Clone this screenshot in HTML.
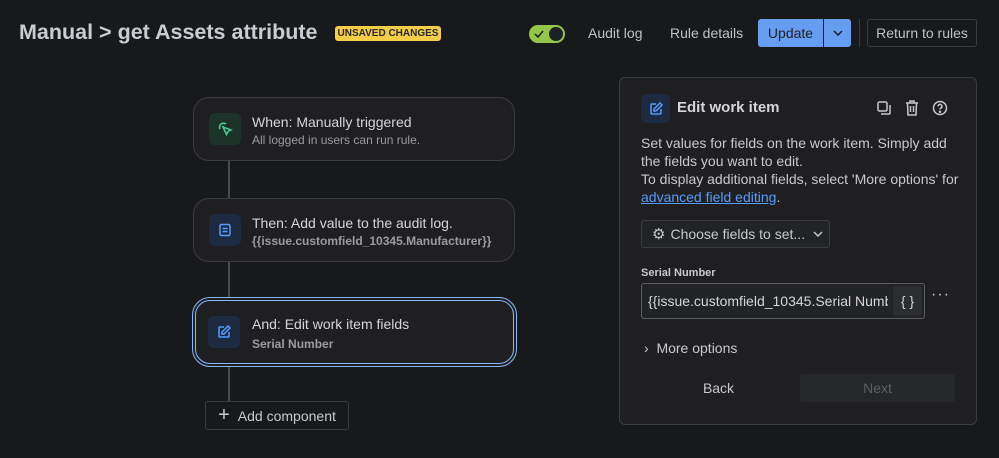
<!DOCTYPE html>
<html><head><meta charset="utf-8"><style>
*{box-sizing:border-box;margin:0;padding:0}
body{width:999px;height:458px;background:#18191b;font-family:"Liberation Sans",sans-serif;color:#c7c9cc;position:relative;overflow:hidden}
.a{position:absolute}
.card{position:absolute;left:193px;width:322px;height:64px;border:1px solid #3b3c40;border-radius:16px;background:#1f1f21}
.ic{position:absolute;left:15px;top:15px;width:32px;height:32px;border-radius:6px;display:flex;align-items:center;justify-content:center}
.t1{position:absolute;left:58px;top:16px;font-size:14px;color:#d4d6d9}
.t2{position:absolute;left:58px;top:35px;font-size:12px;color:#9a9ca1}
.btn{position:absolute;font-size:14px;display:flex;align-items:center;justify-content:center}
</style></head><body>
<div class="a" style="left:19px;top:20px;font-size:21.5px;font-weight:bold;color:#c9ccd2">Manual &gt; get Assets attribute</div>
<div class="a" style="left:335px;top:26px;width:106px;height:15px;background:#f5cd47;border-radius:3px;color:#292a2e;font-size:10px;font-weight:bold;text-align:center;line-height:15px">UNSAVED CHANGES</div>
<div class="a" style="left:529px;top:25px;width:36px;height:18px;background:#94c748;border-radius:9px"><svg class="a" style="left:5px;top:4px" width="10" height="10"><path d="M1 5l3 3 5-6" stroke="#1d2125" stroke-width="1.6" fill="none"/></svg><div class="a" style="left:20px;top:2px;width:14px;height:14px;border-radius:7px;background:#1d2125"></div></div>
<div class="btn" style="left:588px;top:19px;height:28px;color:#bfc1c4">Audit log</div>
<div class="btn" style="left:670px;top:19px;height:28px;color:#bfc1c4">Rule details</div>
<div class="btn" style="left:758px;top:19px;width:65px;height:28px;background:#669df1;border-radius:3px 0 0 3px;color:#1d2125">Update</div>
<div class="btn" style="left:824px;top:19px;width:27px;height:28px;background:#669df1;border-radius:0 3px 3px 0"><svg width="10" height="6"><path d="M1 1l4 4 4-4" stroke="#1d2125" stroke-width="1.5" fill="none"/></svg></div>
<div class="a" style="left:859px;top:19px;width:1px;height:28px;background:#3b3c40"></div>
<div class="btn" style="left:867px;top:19px;width:110px;height:28px;border:1px solid #3b3c40;border-radius:3px;color:#bfc1c4">Return to rules</div>

<div class="a" style="left:228px;top:160px;width:2px;height:245px;background:#4a4b4f"></div>
<div class="card" style="top:97px"><div class="ic" style="background:#1c3329"><svg width="16" height="16" viewBox="0 0 16 16" fill="none" stroke="#4bce97" stroke-width="1.5"><path d="M6 6l8 3-3 1.5-1.5 3z"/><path d="M3 8a4 4 0 0 1 6-5"/></svg></div><div class="t1">When: Manually triggered</div><div class="t2">All logged in users can run rule.</div></div>
<div class="card" style="top:198px"><div class="ic" style="background:#1c2b42"><svg width="16" height="16" viewBox="0 0 16 16" fill="none" stroke="#579dff" stroke-width="1.5"><rect x="3" y="2.5" width="10" height="11" rx="1.5"/><path d="M5.5 6.5h5M5.5 9.5h5"/></svg></div><div class="t1">Then: Add value to the audit log.</div><div class="t2" style="font-weight:bold">{{issue.customfield_10345.Manufacturer}}</div></div>
<div class="card" style="top:297px;left:192px;width:325px;height:70px;border:4px double #85b8ff;border-radius:18px"><div class="ic" style="background:#1c2b42;left:12px;top:15px"><svg width="16" height="16" viewBox="0 0 16 16" fill="none" stroke="#579dff" stroke-width="1.5"><path d="M8 3H4a1 1 0 0 0-1 1v8a1 1 0 0 0 1 1h8a1 1 0 0 0 1-1V8"/><path d="M12 2l2 2-6 6H6V8z"/></svg></div><div class="t1" style="left:56px;top:15px">And: Edit work item fields</div><div class="t2" style="left:56px;top:36px;font-weight:bold">Serial Number</div></div>
<div class="btn" style="left:205px;top:401px;width:144px;height:29px;border:1px solid #3b3c40;border-radius:3px;background:#18191b;color:#c7c9cc;font-size:14px"><span style="font-size:20px;margin-right:8px;font-weight:300">+</span>Add component</div>

<div class="a" style="left:619px;top:77px;width:358px;height:348px;border:1px solid #3b3c40;border-radius:6px;background:#1f1f21">
<div class="a" style="left:21px;top:16px;width:29px;height:29px;border-radius:6px;background:#1c2b42;display:flex;align-items:center;justify-content:center"><svg width="16" height="16" viewBox="0 0 16 16" fill="none" stroke="#579dff" stroke-width="1.5"><path d="M8 3H4a1 1 0 0 0-1 1v8a1 1 0 0 0 1 1h8a1 1 0 0 0 1-1V8"/><path d="M12 2l2 2-6 6H6V8z"/></svg></div>
<div class="a" style="left:57px;top:21px;font-size:15px;font-weight:bold;color:#d4d6d9">Edit work item</div>
<svg class="a" style="left:256px;top:22px" width="16" height="16" fill="none" stroke="#c7c9cc" stroke-width="1.5"><rect x="2" y="2" width="9" height="9" rx="1.5"/><path d="M14 5v8a1 1 0 0 1-1 1H5"/></svg>
<svg class="a" style="left:285px;top:22px" width="14" height="16" fill="none" stroke="#c7c9cc" stroke-width="1.5"><path d="M1 3h12M5 3V1h4v2M2.5 3l.5 12h8l.5-12M5.5 6v6M8.5 6v6"/></svg>
<svg class="a" style="left:312px;top:22px" width="16" height="16" fill="none" stroke="#c7c9cc" stroke-width="1.5"><circle cx="8" cy="8" r="6.5"/><path d="M6 6.3a2 2 0 1 1 2.5 2c-.4.2-.5.5-.5 1.2"/><circle cx="8" cy="11.8" r=".5" fill="#c7c9cc"/></svg>
<div class="a" style="left:21px;top:56px;width:318px;font-size:14px;line-height:18px;color:#c7c9cc">Set values for fields on the work item. Simply add the fields you want to edit.<br>To display additional fields, select 'More options' for <span style="color:#579dff;text-decoration:underline">advanced field editing</span>.</div>
<div class="btn" style="left:21px;top:142px;width:189px;height:28px;border:1px solid #3b3c40;border-radius:3px;background:#222325;color:#c7c9cc;justify-content:flex-start;padding-left:10px"><span style="font-size:15px;margin-right:5px">⚙</span>Choose fields to set...<svg style="margin-left:8px" width="10" height="6"><path d="M1 1l4 4 4-4" stroke="#c7c9cc" stroke-width="1.5" fill="none"/></svg></div>
<div class="a" style="left:21px;top:189px;font-size:11px;font-weight:bold;color:#c7c9cc">Serial Number</div>
<div class="a" style="left:21px;top:205px;width:284px;height:36px;border:1px solid #5a5c61;border-radius:3px;background:#222325;overflow:hidden"><div class="a" style="left:6px;top:9px;font-size:14px;white-space:nowrap;color:#d4d6d9;width:240px;overflow:hidden">{{issue.customfield_10345.Serial Number}}</div><div class="btn" style="left:251px;top:2px;width:29px;height:30px;background:#2c2d30;border-radius:3px;font-size:14px;color:#d4d6d9">{ }</div></div>
<div class="a" style="left:311px;top:208px;font-size:16px;color:#c7c9cc;letter-spacing:1px">···</div>
<div class="a" style="left:24px;top:262px;font-size:14px;color:#c7c9cc">›&nbsp;&nbsp;More options</div>
<div class="btn" style="left:21px;top:296px;width:155px;height:28px;color:#c7c9cc">Back</div>
<div class="btn" style="left:180px;top:296px;width:155px;height:28px;background:#262729;border-radius:3px;color:#5c5e62">Next</div>
</div>
</body></html>
